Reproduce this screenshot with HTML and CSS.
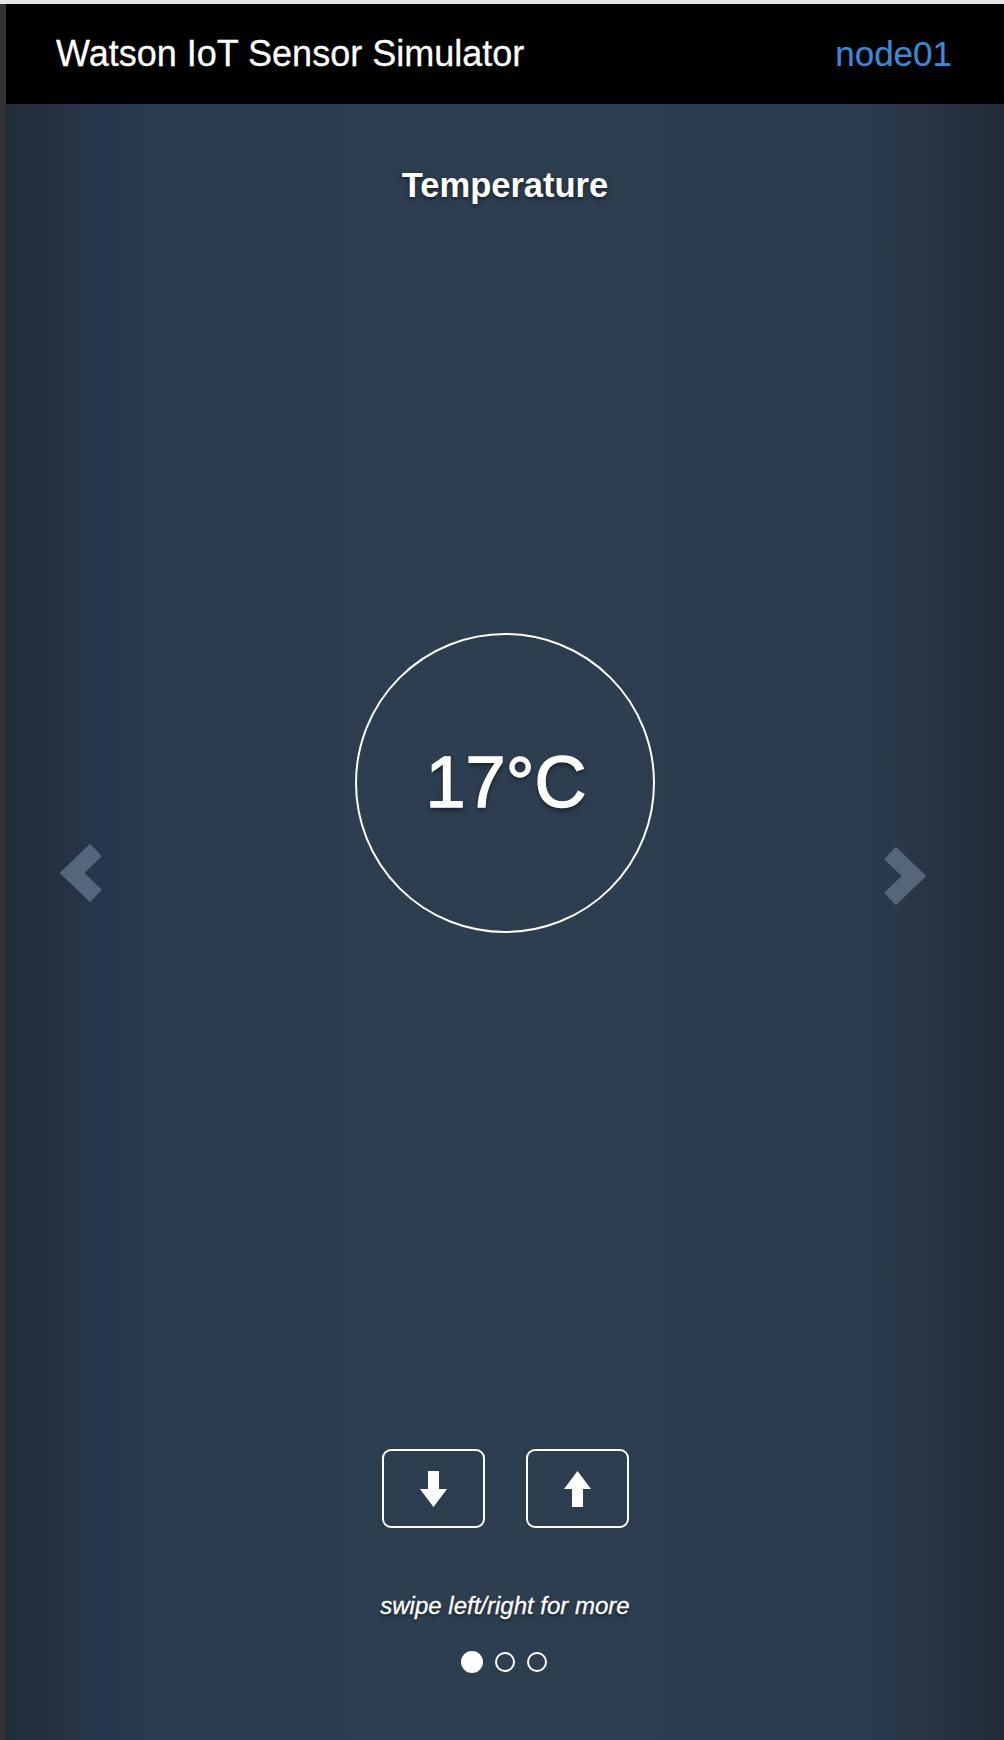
FILE: index.html
```html
<!DOCTYPE html>
<html lang="en">
<head>
<meta charset="utf-8">
<title>Watson IoT Sensor Simulator</title>
<link rel="stylesheet" href="styles.css">
</head>
<body>
<div class="topstrip"></div>
<div class="frame">
  <div class="sidestrip"></div>
  <div class="app">
    <header class="header">
      <h1 class="title">Watson IoT Sensor Simulator</h1>
      <span class="device">node01</span>
    </header>
    <main class="carousel">
      <h2 class="sensor-name">Temperature</h2>
      <div class="gauge"><span class="value">17°C</span></div>
      <div class="controls">
        <button class="ctrl" aria-label="decrease">
          <svg width="27" height="36" viewBox="0 0 27 36"><path d="M8 0H19V18H27L13.5 36L0 18H8Z" fill="#fff"/></svg>
        </button>
        <button class="ctrl" aria-label="increase">
          <svg width="27" height="36" viewBox="0 0 27 36"><path d="M13.5 0L27 18H19V36H8V18H0Z" fill="#fff"/></svg>
        </button>
      </div>
      <p class="hint">swipe left/right for more</p>
      <div class="dots">
        <span class="dot active"></span>
        <span class="dot"></span>
        <span class="dot"></span>
      </div>
      <a class="nav nav-prev" aria-label="previous">
        <svg width="46" height="66" viewBox="0 0 46 66"><polyline points="38,10 14,33 38,56" fill="none" stroke="#55657a" stroke-width="17" stroke-linejoin="miter" stroke-linecap="butt"/></svg>
      </a>
      <a class="nav nav-next" aria-label="next">
        <svg width="46" height="66" viewBox="0 0 46 66"><polyline points="8,10 32,33 8,56" fill="none" stroke="#55657a" stroke-width="17" stroke-linejoin="miter" stroke-linecap="butt"/></svg>
      </a>
    </main>
  </div>
</div>
</body>
</html>
```
FILE: styles.css
```css
html, body {
  margin: 0;
  padding: 0;
}
body {
  width: 1004px;
  height: 1740px;
  overflow: hidden;
  background: #2d3d50;
  font-family: "Liberation Sans", Arial, Helvetica, sans-serif;
  color: #fff;
}
.topstrip {
  height: 4px;
  background: #e6e6e6;
}
.frame {
  display: flex;
  height: 1736px;
}
.sidestrip {
  width: 6px;
  flex: none;
  background: #333333;
}
.app {
  flex: 1;
  display: flex;
  flex-direction: column;
}
.header {
  height: 100px;
  flex: none;
  background: #000;
  display: flex;
  align-items: center;
  justify-content: space-between;
  padding: 0 52px 0 50px;
}
.title {
  margin: 0;
  font-size: 36px;
  font-weight: normal;
  color: #fff;
  -webkit-text-stroke: 0.3px #fff;
}
.device {
  font-size: 35px;
  color: #3a8ad6;
  -webkit-text-stroke: 0.2px #3a8ad6;
}
.carousel {
  position: relative;
  flex: 1;
  display: flex;
  flex-direction: column;
  align-items: center;
  background: linear-gradient(to right, #212c39 0px, #27364a 90px, #2d3d50 170px, #2e3e51 500px, #2d3d50 820px, #293749 900px, #212b37 998px);
}
.sensor-name {
  margin: 61px 0 0;
  height: 40px;
  line-height: 40px;
  font-size: 34.5px;
  font-weight: bold;
  text-shadow: 0 2px 4px rgba(0, 0, 0, 0.55);
}
.gauge {
  margin-top: 428px;
  width: 296px;
  height: 296px;
  border: 2px solid #fff;
  border-radius: 50%;
  display: flex;
  align-items: center;
  justify-content: center;
}
.value {
  font-size: 72px;
  line-height: 1;
  margin-top: -2px;
  margin-left: 2px;
  -webkit-text-stroke: 1.4px #fff;
  text-shadow: 0 3px 5px rgba(0, 0, 0, 0.5);
}
.controls {
  margin-top: 516px;
  display: flex;
  gap: 41px;
}
.ctrl {
  width: 103px;
  height: 79px;
  box-sizing: border-box;
  border: 2px solid #fff;
  border-radius: 9px;
  background: transparent;
  padding: 0;
  display: flex;
  align-items: center;
  justify-content: center;
}
.hint {
  margin: 63px 0 0;
  height: 30px;
  line-height: 30px;
  font-size: 24px;
  font-style: italic;
  -webkit-text-stroke: 0.3px #fff;
  text-shadow: 0 2px 3px rgba(0, 0, 0, 0.55);
}
.dots {
  margin-top: 30px;
  display: flex;
  align-items: center;
  gap: 12px;
  margin-left: -2px;
}
.dot {
  width: 20px;
  height: 20px;
  box-sizing: border-box;
  border: 2px solid #fff;
  border-radius: 50%;
}
.dot.active {
  width: 22px;
  height: 22px;
  background: #fff;
}
.nav {
  position: absolute;
  display: block;
  line-height: 0;
}
.nav-prev {
  left: 52px;
  top: 736px;
}
.nav-next {
  right: 76px;
  top: 739px;
}
```
